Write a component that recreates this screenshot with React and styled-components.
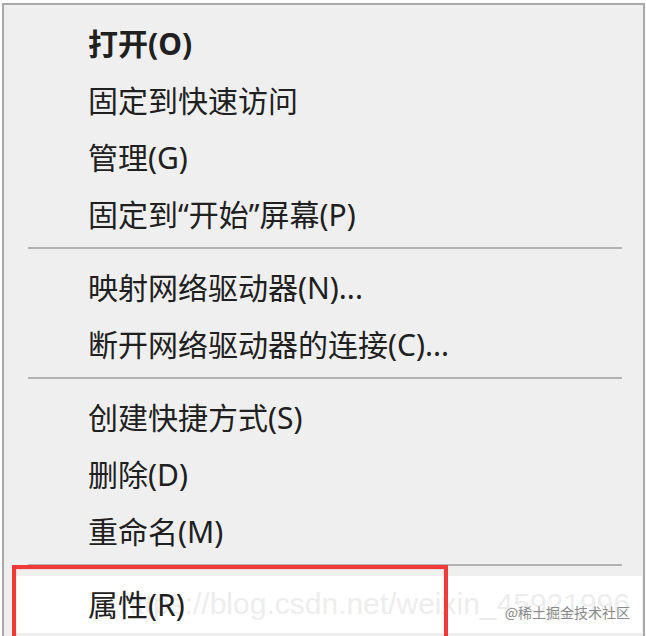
import styled, { createGlobalStyle } from "styled-components";

const GlobalStyle = createGlobalStyle`
  html, body {
    margin: 0;
    padding: 0;
    height: 636px;
    overflow: hidden;
    background: #ffffff;
  }
`;

const Page = styled.div`
  padding: 3px 1px 0 2px;
  height: 636px;
  box-sizing: border-box;
`;

const Menu = styled.div`
  position: relative;
  width: 643px;
  height: 640px;
  box-sizing: border-box;
  background: #efefef;
  border: 2px solid #a9a9a9;
  border-bottom: none;
  padding-top: 10px;
  font-family: "Noto Sans", "Noto Sans CJK SC", sans-serif;
  color: #202020;
`;

const Item = styled.div`
  position: relative;
  height: 57px;
  display: flex;
  align-items: center;
  padding-left: ${(p) => (p.$active ? "74px" : "84px")};
  margin: ${(p) => (p.$active ? "0 1px 0 10px" : "0")};
  background: ${(p) => (p.$active ? "#ffffff" : "transparent")};
  font-size: 30px;
  font-weight: ${(p) => (p.$bold ? 700 : 400)};
  white-space: nowrap;
`;

const Label = styled.span`
  position: relative;
  z-index: 1;
  line-height: 1;
`;

const Separator = styled.div`
  height: 2px;
  background: #b3b3b3;
  margin: 4px 21px 10px 24px;
`;

const RedBox = styled.div`
  position: absolute;
  top: -11px;
  left: -2px;
  width: 436px;
  height: 80px;
  box-sizing: border-box;
  border: 4px solid #ef3a3a;
  box-shadow: inset 0 0 2px rgba(239, 58, 58, 0.35);
  z-index: 2;
`;

const Watermark = styled.span`
  position: absolute;
  right: 12px;
  top: 50%;
  transform: translateY(-52%);
  font-family: "Liberation Sans", Arial, sans-serif;
  font-size: 30px;
  color: #ededed;
  white-space: nowrap;
`;

const Credit = styled.span`
  position: absolute;
  right: 12px;
  top: 29px;
  font-family: "Noto Sans CJK SC", sans-serif;
  font-size: 14px;
  line-height: 1;
  color: #8a8a8a;
  z-index: 3;
`;

const groups = [
  [
    { text: "打开(O)", bold: true },
    { text: "固定到快速访问" },
    { text: "管理(G)" },
    { text: "固定到“开始”屏幕(P)" },
  ],
  [{ text: "映射网络驱动器(N)..." }, { text: "断开网络驱动器的连接(C)..." }],
  [{ text: "创建快捷方式(S)" }, { text: "删除(D)" }, { text: "重命名(M)" }],
];

export default function App() {
  return (
    <Page>
      <GlobalStyle />
      <Menu>
        {groups.map((group, i) => (
          <div key={i}>
            {group.map((item) => (
              <Item key={item.text} $bold={item.bold}>
                <Label>{item.text}</Label>
              </Item>
            ))}
            <Separator />
          </div>
        ))}
        <Item $active>
          <Watermark>https://blog.csdn.net/weixin_45921996</Watermark>
          <Label>属性(R)</Label>
          <Credit>@稀土掘金技术社区</Credit>
          <RedBox />
        </Item>
      </Menu>
    </Page>
  );
}
